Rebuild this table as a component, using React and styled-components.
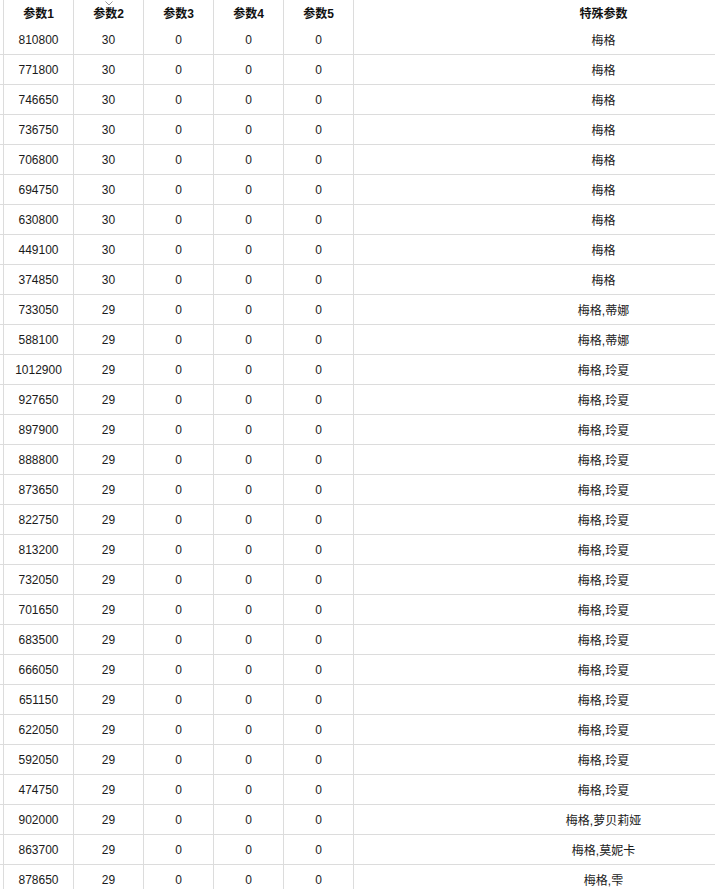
import React from "react";
import styled, { createGlobalStyle } from "styled-components";

const GlobalStyle = createGlobalStyle`
  html, body {
    margin: 0;
    padding: 0;
    background: #fff;
  }
  body {
    font-family: "Liberation Sans", "Noto Sans CJK SC", sans-serif;
    color: #1a1a1a;
  }
`;

const rows = [
  ["810800", "30", "梅格"],
  ["771800", "30", "梅格"],
  ["746650", "30", "梅格"],
  ["736750", "30", "梅格"],
  ["706800", "30", "梅格"],
  ["694750", "30", "梅格"],
  ["630800", "30", "梅格"],
  ["449100", "30", "梅格"],
  ["374850", "30", "梅格"],
  ["733050", "29", "梅格,蒂娜"],
  ["588100", "29", "梅格,蒂娜"],
  ["1012900", "29", "梅格,玲夏"],
  ["927650", "29", "梅格,玲夏"],
  ["897900", "29", "梅格,玲夏"],
  ["888800", "29", "梅格,玲夏"],
  ["873650", "29", "梅格,玲夏"],
  ["822750", "29", "梅格,玲夏"],
  ["813200", "29", "梅格,玲夏"],
  ["732050", "29", "梅格,玲夏"],
  ["701650", "29", "梅格,玲夏"],
  ["683500", "29", "梅格,玲夏"],
  ["666050", "29", "梅格,玲夏"],
  ["651150", "29", "梅格,玲夏"],
  ["622050", "29", "梅格,玲夏"],
  ["592050", "29", "梅格,玲夏"],
  ["474750", "29", "梅格,玲夏"],
  ["902000", "29", "梅格,萝贝莉娅"],
  ["863700", "29", "梅格,莫妮卡"],
  ["878650", "29", "梅格,雫"],
];

const columns = [
  { key: "hidden", label: "", width: 70 },
  { key: "p1", label: "参数1", width: 70 },
  { key: "p2", label: "参数2", width: 70, sorted: true },
  { key: "p3", label: "参数3", width: 70 },
  { key: "p4", label: "参数4", width: 70 },
  { key: "p5", label: "参数5", width: 70 },
  { key: "special", label: "特殊参数", width: 500 },
];

const Viewport = styled.div`
  width: 715px;
  height: 889px;
  overflow: hidden;
`;

const Table = styled.table`
  margin-left: -66px;
  border-collapse: separate;
  border-spacing: 0;
  table-layout: fixed;
  width: 920px;
  font-size: 12px;
`;

const HeadCell = styled.th`
  position: relative;
  height: 25px;
  padding: 0 0 1px;
  box-sizing: border-box;
  border-right: 1px solid #dcdcdc;
  font-weight: bold;
  text-align: center;
  vertical-align: middle;
  color: #111;
`;

const SortMark = styled.svg`
  position: absolute;
  top: 1px;
  left: 50%;
  margin-left: -4px;
`;

const Cell = styled.td`
  height: 30px;
  padding: 0;
  box-sizing: border-box;
  border-right: 1px solid #dcdcdc;
  border-bottom: 1px solid #dcdcdc;
  text-align: center;
  vertical-align: middle;
  white-space: nowrap;
  color: #1a1a1a;
`;

export default function App() {
  return (
    <>
      <GlobalStyle />
      <Viewport>
        <Table>
          <colgroup>
            {columns.map((c) => (
              <col key={c.key} style={{ width: c.width }} />
            ))}
          </colgroup>
          <thead>
            <tr>
              {columns.map((c) => (
                <HeadCell key={c.key}>
                  {c.sorted && (
                    <SortMark width="8" height="5" viewBox="0 0 8 5">
                      <polyline points="0.5,0.5 4,4 7.5,0.5" fill="none" stroke="#9a9a9a" strokeWidth="1" />
                    </SortMark>
                  )}
                  {c.label}
                </HeadCell>
              ))}
            </tr>
          </thead>
          <tbody>
            {rows.map(([p1, p2, special], index) => (
              <tr key={index}>
                <Cell />
                <Cell>{p1}</Cell>
                <Cell>{p2}</Cell>
                <Cell>0</Cell>
                <Cell>0</Cell>
                <Cell>0</Cell>
                <Cell>{special}</Cell>
              </tr>
            ))}
          </tbody>
        </Table>
      </Viewport>
    </>
  );
}
